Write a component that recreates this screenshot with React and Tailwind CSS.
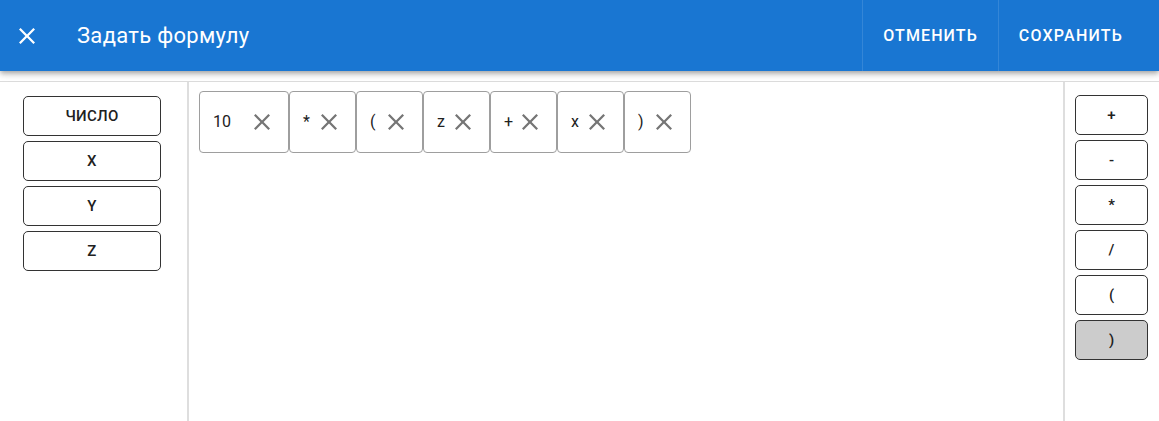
import React from 'react'

const FONT = { fontFamily: 'Roboto, "Noto Sans", "Liberation Sans", sans-serif' }

const TOKENS = [
    { id: 1, label: '10', wide: true },
    { id: 2, label: '*' },
    { id: 3, label: '(' },
    { id: 4, label: 'z' },
    { id: 5, label: '+' },
    { id: 6, label: 'x' },
    { id: 7, label: ')' },
]

const VARS = ['ЧИСЛО', 'X', 'Y', 'Z']
const OPS = ['+', '-', '*', '/', '(', ')']

function CloseIcon({ className }) {
    return (
        <svg viewBox="5 5 14 14" width="16" height="16" className={className} fill="currentColor">
            <path d="M19 6.41 17.59 5 12 10.59 6.41 5 5 6.41 10.59 12 5 17.59 6.41 19 12 13.41 17.59 19 19 17.59 13.41 12z" />
        </svg>
    )
}

export default function App() {
    return (
        <div className="h-screen flex flex-col bg-white text-[#212121]" style={FONT}>
            {/* app bar */}
            <header className="relative z-10 h-[71px] shrink-0 flex items-stretch bg-[#1976d2] text-white shadow-[0_2px_4px_-1px_rgba(0,0,0,0.2),0_4px_5px_0_rgba(0,0,0,0.14),0_1px_10px_0_rgba(0,0,0,0.12)]">
                <button className="w-[53px] flex items-center justify-center">
                    <CloseIcon />
                </button>
                <h1 className="flex items-center pl-[24px] text-[22px] font-normal tracking-[0.3px]">Задать формулу</h1>
                <div className="flex-1" />
                <button className="px-[20px] border-l border-[#ffffff1f] text-[16px] font-medium tracking-[1.1px] uppercase">
                    Отменить
                </button>
                <button className="pl-[20px] pr-[36px] border-l border-[#ffffff1f] text-[16px] font-medium tracking-[1.2px] uppercase">
                    Сохранить
                </button>
            </header>

            <main className="flex-1 flex mt-[10px] border-t border-[#dcdcdc]">
                {/* variables */}
                <aside className="w-[189px] shrink-0 border-r-2 border-[#dedede] pt-[14px] pl-[23px] flex flex-col gap-[5px]">
                    {VARS.map(v => (
                        <button key={v} className="w-[138px] h-[40px] rounded-[5px] border border-[#333] text-[15px] font-medium tracking-[0.02em]">
                            {v}
                        </button>
                    ))}
                </aside>

                {/* formula */}
                <section className="flex-1 pt-[9px] pl-[10px]">
                    <div className="flex flex-wrap">
                        {TOKENS.map(tok => (
                            <div key={tok.id} className="h-[62px] flex items-center pl-[13px] pr-[18px] border border-[#9e9e9e] rounded-[4px] text-[16px]">
                                <span className={tok.wide ? 'w-[33px]' : 'w-[10px]'}>{tok.label}</span>
                                <CloseIcon className="ml-[8px] text-[#757575]" />
                            </div>
                        ))}
                    </div>
                </section>

                {/* operators */}
                <aside className="w-[96px] shrink-0 border-l-2 border-[#dedede] pt-[13px] pl-[10px] flex flex-col gap-[5px]">
                    {OPS.map(op => (
                        <button
                            key={op}
                            className={`w-[73px] h-[40px] rounded-[5px] border border-[#333] text-[15px] font-medium ${op === ')' ? 'bg-[#cccccc]' : ''}`}
                        >
                            {op}
                        </button>
                    ))}
                </aside>
            </main>
        </div>
    )
}
